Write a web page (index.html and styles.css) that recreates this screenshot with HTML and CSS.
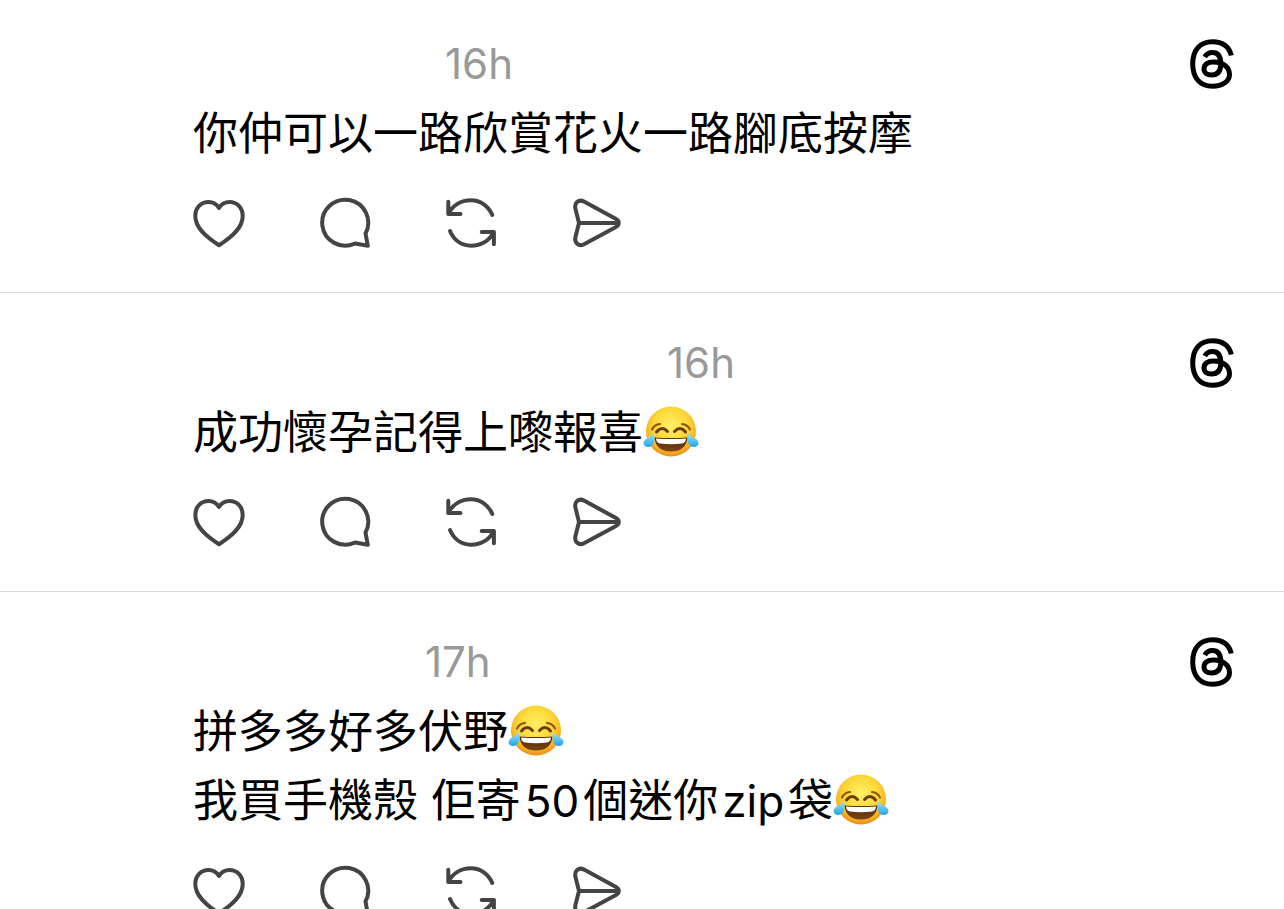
FILE: index.html
```html
<!DOCTYPE html>
<html lang="zh-Hant-HK">
  <head>
    <meta charset="UTF-8" />
    <meta name="viewport" content="width=device-width, initial-scale=1.0" />
    <title>Threads</title>
    <link rel="stylesheet" href="styles.css">
  </head>
  <body>
    <!-- shared icons -->
    <svg class="sprite" aria-hidden="true">
      <defs>
        <radialGradient id="face" cx="50%" cy="38%" r="62%">
          <stop offset="0" stop-color="#fff06a" />
          <stop offset="0.55" stop-color="#fdd835" />
          <stop offset="0.85" stop-color="#f7b023" />
          <stop offset="1" stop-color="#e88a14" />
        </radialGradient>
        <linearGradient id="mouth" x1="0" y1="0" x2="0" y2="1">
          <stop offset="0" stop-color="#4f280c" />
          <stop offset="1" stop-color="#7d4512" />
        </linearGradient>
        <linearGradient id="tear" x1="0" y1="0" x2="0" y2="1">
          <stop offset="0" stop-color="#a5e4fb" />
          <stop offset="1" stop-color="#1fa4e8" />
        </linearGradient>
      </defs>
      <symbol id="heart" viewBox="0 0 52 52">
        <path d="M26 11C23.5 7 19.5 5 15.5 5C8 5 2.3 10.8 2.3 19C2.3 31 13 40 26 48.2C39 40 49.7 31 49.7 19C49.7 10.8 44 5 36.5 5C32.5 5 28.5 7 26 11Z" />
      </symbol>
      <symbol id="reply" viewBox="0 0 52 52">
        <path d="M46.5 36.5L48.8 48.8L36 46.5A23 23 0 1 1 46.5 36.5Z" />
      </symbol>
      <symbol id="repost" viewBox="0 0 52 52">
        <path d="M3.3 4.7V17H15.5M3.3 17C7.5 8.5 16 3.3 26 3.3C35.5 3.3 43.5 9 47.3 18" />
        <path d="M48.9 47.3V35H36.7M48.9 35C44.5 43.5 36 48.7 26 48.7C16.5 48.7 8.7 43 5 34" />
      </symbol>
      <symbol id="send" viewBox="0 0 52 52">
        <path d="M8 26L4.5 12C3 6 7.5 1.8 13 4.6L45 22C48.7 24 48.7 28 45 30L13 47.2C7.5 50 3 45.8 4.5 39.8ZM8 26H46" />
      </symbol>
      <symbol id="threads" viewBox="0 0 44 50">
        <path d="M41.3 16.5C39 7.5 32.5 2.8 22.5 2.8C10 2.8 2.7 11 2.7 25C2.7 39 10 47.2 22.5 47.2C33 47.2 39.5 42 39.5 35.5C39.5 28 33 23 23.5 23C17.5 23 14 25.5 14 30C14 33.8 17 36 21.5 36C27.5 36 30.8 32.2 30.8 25C30.8 17.5 28 13.6 22.5 13.6C19 13.6 16.5 15 14.8 18" />
      </symbol>
      <symbol id="joy" viewBox="0 0 56 52">
        <circle cx="28" cy="26.5" r="25" fill="url(#face)" />
        <path d="M9 24.5Q11.5 19.5 17 19M47 24.5Q44.5 19.5 39 19" fill="none" stroke="#8a520e" stroke-width="2" stroke-linecap="round" />
        <path d="M13.5 27Q18.5 20.5 24.5 26.5M31.5 26.5Q37.5 20.5 42.5 27" fill="none" stroke="#6b3a0c" stroke-width="3" stroke-linecap="round" />
        <path d="M11.5 32.5Q28 33.5 44.5 32.5Q43 46.5 28 46.5Q13 46.5 11.5 32.5Z" fill="url(#mouth)" />
        <path d="M13 33.5Q28 34.5 43 33.5Q42.5 38 39 38.5Q28 40 17 38.5Q13.5 38 13 33.5Z" fill="#fff" />
        <path d="M11 28C12.5 34 11 42 5.5 42C0 42 -1 37 3 34C6 32 8.5 31 11 28Z" fill="url(#tear)" />
        <path d="M45 28C43.5 34 45 42 50.5 42C56 42 57 37 53 34C50 32 47.5 31 45 28Z" fill="url(#tear)" />
      </symbol>
    </svg>

    <main class="feed">
      <article class="post">
        <header class="post-header">
          <span class="author author-short"></span>
          <time>16h</time>
          <a class="logo" href="#" aria-label="Threads"><svg><use href="#threads" /></svg></a>
        </header>
        <p class="message">你仲可以一路欣賞花火一路腳底按摩</p>
        <div class="actions">
          <button type="button" aria-label="Like"><svg><use href="#heart" /></svg></button>
          <button type="button" aria-label="Reply"><svg><use href="#reply" /></svg></button>
          <button type="button" aria-label="Repost"><svg><use href="#repost" /></svg></button>
          <button type="button" aria-label="Share"><svg><use href="#send" /></svg></button>
        </div>
      </article>

      <article class="post">
        <header class="post-header">
          <span class="author author-long"></span>
          <time>16h</time>
          <a class="logo" href="#" aria-label="Threads"><svg><use href="#threads" /></svg></a>
        </header>
        <p class="message">成功懷孕記得上嚟報喜<svg class="emoji" role="img" aria-label="😂"><use href="#joy" /></svg></p>
        <div class="actions">
          <button type="button" aria-label="Like"><svg><use href="#heart" /></svg></button>
          <button type="button" aria-label="Reply"><svg><use href="#reply" /></svg></button>
          <button type="button" aria-label="Repost"><svg><use href="#repost" /></svg></button>
          <button type="button" aria-label="Share"><svg><use href="#send" /></svg></button>
        </div>
      </article>

      <article class="post">
        <header class="post-header">
          <span class="author"></span>
          <time>17h</time>
          <a class="logo" href="#" aria-label="Threads"><svg><use href="#threads" /></svg></a>
        </header>
        <p class="message">拼多多好多伏野<svg class="emoji" role="img" aria-label="😂"><use href="#joy" /></svg><br>我買手機殼 佢寄<span class="latin">50</span>個迷你<span class="latin">zip</span>袋<svg class="emoji" role="img" aria-label="😂"><use href="#joy" /></svg></p>
        <div class="actions">
          <button type="button" aria-label="Like"><svg><use href="#heart" /></svg></button>
          <button type="button" aria-label="Reply"><svg><use href="#reply" /></svg></button>
          <button type="button" aria-label="Repost"><svg><use href="#repost" /></svg></button>
          <button type="button" aria-label="Share"><svg><use href="#send" /></svg></button>
        </div>
      </article>
    </main>
  </body>
</html>
```
FILE: styles.css
```css
body {
  font-family: Inter, "Noto Sans CJK TC", sans-serif;
  background-color: #fff;
  color: #000;
  margin: 0;
}
.sprite {
  position: absolute;
  width: 0;
  height: 0;
}
.feed {
  height: 100vh;
  overflow: hidden;
}
.post {
  padding: 45px 50px 43px 193px;
  border-bottom: 1px solid #d8d8d8;
}
.post:first-child {
  padding-top: 39px;
}
.post-header {
  display: flex;
  align-items: center;
  height: 50px;
  margin-bottom: 10px;
}
.author {
  width: 232px;
}
.author-short {
  width: 252px;
}
.author-long {
  width: 474px;
}
time {
  font-size: 42px;
  line-height: 50px;
  color: #999;
}
.logo {
  margin-left: auto;
  color: #000;
}
.logo svg {
  display: block;
  width: 44px;
  height: 50px;
  fill: none;
  stroke: currentColor;
  stroke-width: 5;
}
.message {
  margin: 0;
  font-size: 45px;
  line-height: 69px;
}
.latin {
  font-size: 44px;
  margin: 0 4px;
}
.emoji {
  width: 56px;
  height: 52px;
  vertical-align: -8px;
}
.actions {
  display: flex;
  gap: 74px;
  margin-top: 29px;
}
.actions button {
  padding: 0;
  border: 0;
  background: none;
  color: #444;
  cursor: pointer;
}
.actions svg {
  display: block;
  width: 52px;
  height: 52px;
  fill: none;
  stroke: currentColor;
  stroke-width: 4;
  stroke-linecap: round;
  stroke-linejoin: round;
}
```
